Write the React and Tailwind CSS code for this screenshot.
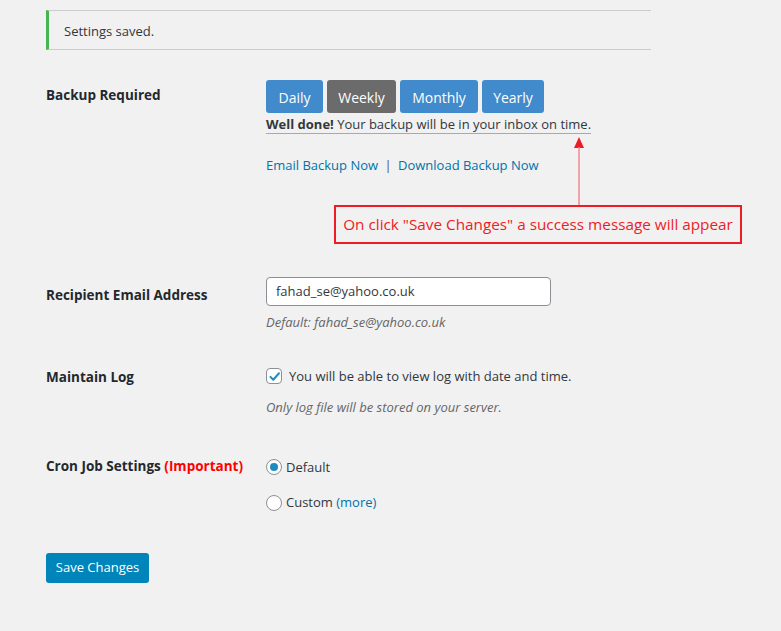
import React from "react";

export default function App() {
  const font = { fontFamily: '"Open Sans", "Noto Sans", sans-serif' };
  const buttons = [
    ["Daily", "w-[57px]"],
    ["Weekly", "w-[69px]"],
    ["Monthly", "w-[78px]"],
    ["Yearly", "w-[62px]"],
  ];
  return (
    <div className="relative min-h-[631px] w-[781px] bg-[#f1f1f1] text-[#23282d] text-[13px]" style={font}>
      <div className="pl-[46px] pt-[10px]">
        {/* notice */}
        <div className="flex h-[40px] w-[605px] items-center border-y border-[#cccccc] border-l-[3px] border-l-[#46b450] pl-[15px] pt-[3px] text-[13px] text-[#32373c]">
          Settings saved.
        </div>

        {/* row 1 */}
        <div className="mt-[30px] flex">
          <div className="w-[220px] pt-[5px] text-[13.5px] font-bold">Backup Required</div>
          <div className="flex flex-col">
            <div className="flex gap-[4px]">
              {buttons.map(([l, w]) => (
                <div
                  key={l}
                  className={`flex h-[33px] items-center justify-center rounded-[3px] pt-[1px] text-[14px] text-white ${w} ${l === "Weekly" ? "bg-[#6b6b6b]" : "bg-[#418acb]"}`}
                >
                  {l}
                </div>
              ))}
            </div>
            <div className="mt-[2px]">
              <span className="inline-block border-b border-[#f08a8f] pb-[1px] text-[13px] leading-[16px] text-[#32373c]">
                <b>Well done!</b> Your backup will be in your inbox on time.
              </span>
            </div>
            <div className="mt-[21px] text-[13px] text-[#0073aa]">
              Email Backup Now <span className="mx-[3px] text-[#555]">|</span> Download Backup Now
            </div>
          </div>
        </div>

        {/* row 2 */}
        <div className="mt-[102px] flex">
          <div className="w-[220px] pt-[8px] text-[13.5px] font-bold">Recipient Email Address</div>
          <div className="flex flex-col">
            <div className="flex h-[29px] w-[285px] items-center rounded-[4px] border border-[#8c8f94] bg-white px-[9px] text-[13px] text-[#32373c]">
              fahad_se@yahoo.co.uk
            </div>
            <div className="mt-[7px] italic text-[#666]">Default: fahad_se@yahoo.co.uk</div>
          </div>
        </div>

        {/* row 3 */}
        <div className="mt-[34px] flex">
          <div className="w-[220px] text-[13.5px] font-bold">Maintain Log</div>
          <div className="flex flex-col">
            <div className="flex items-center gap-[7px]">
              <div className="flex h-[16px] w-[16px] items-center justify-center rounded-[4px] border border-[#8c8f94] bg-white">
                <svg width="13" height="13" viewBox="0 0 16 16">
                  <path d="M3 8.5 L6.5 12 L13.5 4" fill="none" stroke="#1e8cbe" strokeWidth="2.4" strokeLinecap="round" strokeLinejoin="round" />
                </svg>
              </div>
              <span className="text-[13px] text-[#32373c]">You will be able to view log with date and time.</span>
            </div>
            <div className="mt-[12px] italic text-[#666]">Only log file will be stored on your server.</div>
          </div>
        </div>

        {/* row 4 */}
        <div className="mt-[38px] flex">
          <div className="w-[220px] text-[13.5px] font-bold">
            Cron Job Settings <span className="text-[#ff0000]">(Important)</span>
          </div>
          <div className="flex flex-col pt-[2px]">
            <div className="flex items-center gap-[4px]">
              <div className="flex h-[16px] w-[16px] items-center justify-center rounded-full border border-[#8c8f94] bg-white">
                <div className="h-[8px] w-[8px] rounded-full bg-[#1e8cbe]" />
              </div>
              <span className="text-[#32373c]">Default</span>
            </div>
            <div className="mt-[16px] flex items-center gap-[4px]">
              <div className="h-[16px] w-[16px] rounded-full border border-[#8c8f94] bg-white" />
              <span className="text-[#32373c]">
                Custom <span className="text-[#0073aa]">(more)</span>
              </span>
            </div>
          </div>
        </div>

        {/* save */}
        <div className="mt-[40px]">
          <div className="inline-flex h-[30px] w-[103px] items-center justify-center rounded-[3px] bg-[#0085ba] text-[13px] text-white">
            Save Changes
          </div>
        </div>
      </div>

      {/* annotation overlay */}
      <svg className="absolute left-[570px] top-[135px]" width="20" height="72" viewBox="0 0 20 72">
        <polygon points="9,2 4,13 14,13" fill="#ee1c25" />
        <line x1="9" y1="12" x2="9" y2="72" stroke="#f08a8f" strokeWidth="1.5" />
      </svg>
      <div className="absolute left-[334px] top-[205px] flex h-[39px] w-[408px] items-center justify-center border-2 border-[#ee1c25] text-[15.3px] text-[#ee1c25]">
        On click "Save Changes" a success message will appear
      </div>
    </div>
  );
}
